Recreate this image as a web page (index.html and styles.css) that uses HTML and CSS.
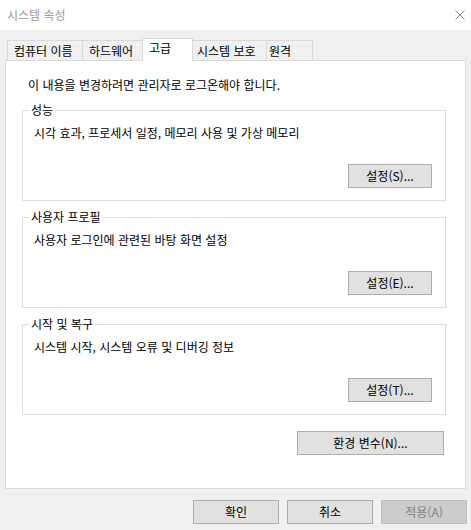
FILE: index.html
```html
<!DOCTYPE html>
<html lang="ko">

<head>
    <meta charset="UTF-8" />
    <meta name="viewport" content="width=device-width, initial-scale=1.0" />
    <title>시스템 속성</title>
    <link rel="stylesheet" href="styles.css">
</head>

<body>

    <div class="titlebar">
        <span class="title">시스템 속성</span>
        <svg class="close" width="10" height="10" viewBox="0 0 10 10">
            <path d="M0.5 0.5 L9.5 9.5 M9.5 0.5 L0.5 9.5" stroke="#8a8a8a" stroke-width="1" fill="none" />
        </svg>
    </div>

    <div class="tabs">
        <div class="tab">컴퓨터 이름</div>
        <div class="tab">하드웨어</div>
        <div class="tab active">고급</div>
        <div class="tab">시스템 보호</div>
        <div class="tab">원격</div>
    </div>

    <div class="panel">
        <p class="note">이 내용을 변경하려면 관리자로 로그온해야 합니다.</p>

        <fieldset class="group">
            <legend>성능</legend>
            <p>시각 효과, 프로세서 일정, 메모리 사용 및 가상 메모리</p>
            <div class="group-actions">
                <button>설정(S)...</button>
            </div>
        </fieldset>

        <fieldset class="group">
            <legend>사용자 프로필</legend>
            <p>사용자 로그인에 관련된 바탕 화면 설정</p>
            <div class="group-actions">
                <button>설정(E)...</button>
            </div>
        </fieldset>

        <fieldset class="group">
            <legend>시작 및 복구</legend>
            <p>시스템 시작, 시스템 오류 및 디버깅 정보</p>
            <div class="group-actions">
                <button>설정(T)...</button>
            </div>
        </fieldset>

        <div class="panel-actions">
            <button class="wide">환경 변수(N)...</button>
        </div>
    </div>

    <div class="dialog-actions">
        <button>확인</button>
        <button>취소</button>
        <button disabled>적용(A)</button>
    </div>

</body>

</html>
```

FILE: styles.css
```css
body {
    font-family: "Noto Sans CJK KR", "Noto Sans", sans-serif;
    font-size: 12px;
    line-height: 16px;
    color: #000;
    background: #f0f0f0;
    margin: 0;
    width: 471px;
    height: 530px;
    overflow: hidden;
}

.titlebar {
    height: 30px;
    background: #fff;
    display: flex;
    align-items: center;
    justify-content: space-between;
    padding: 0 6px 0 7px;
}

.title {
    color: #999;
}

.close {
    display: block;
}

.tabs {
    display: flex;
    align-items: flex-end;
    height: 22px;
    margin-top: 8px;
    padding-left: 7px;
    position: relative;
    z-index: 1;
}

.tab {
    height: 20px;
    box-sizing: border-box;
    border: 1px solid #d9d9d9;
    border-bottom: none;
    padding: 2px 0 0 6px;
    margin-left: -1px;
    background: #f0f0f0;
    white-space: nowrap;
}

.tab:first-child {
    margin-left: 0;
}

.tab:nth-child(1) { width: 76px; }
.tab:nth-child(2) { width: 61px; }
.tab:nth-child(3) { width: 51px; }
.tab:nth-child(4) { width: 75px; padding-left: 4px; }
.tab:nth-child(5) { width: 47px; padding-left: 2px; }

.tab.active {
    height: 23px;
    margin-bottom: -1px;
    background: #fff;
    padding-top: 1px;
}

.panel {
    width: 461px;
    box-sizing: border-box;
    margin-left: 5px;
    background: #fff;
    border: 1px solid #d9d9d9;
    padding: 16px 19px 33px 16px;
}

.note {
    margin: 0 0 9px 6px;
}

.group {
    margin: 0;
    border: 1px solid #dcdcdc;
    padding: 7px 13px 12px 11px;
}

.group + .group {
    margin-top: 8px;
}

.group legend {
    padding: 0 2px;
    margin-left: -5px;
}

.group p {
    margin: 0;
}

.group-actions {
    display: flex;
    justify-content: flex-end;
    margin-top: 23px;
}

.panel-actions {
    display: flex;
    justify-content: flex-end;
    margin: 16px 2px 0 0;
}

button {
    font-family: inherit;
    font-size: 12px;
    line-height: 16px;
    color: #000;
    width: 84px;
    height: 24px;
    padding: 0;
    background: #e1e1e1;
    border: 1px solid #adadad;
    border-radius: 0;
}

button.wide {
    width: 147px;
}

button:disabled {
    background: #cccccc;
    border-color: #bfbfbf;
    color: #838383;
}

.dialog-actions {
    display: flex;
    justify-content: flex-end;
    gap: 8px;
    margin-top: 11px;
    padding-right: 4px;
}

.dialog-actions button {
    width: 86px;
}
```
